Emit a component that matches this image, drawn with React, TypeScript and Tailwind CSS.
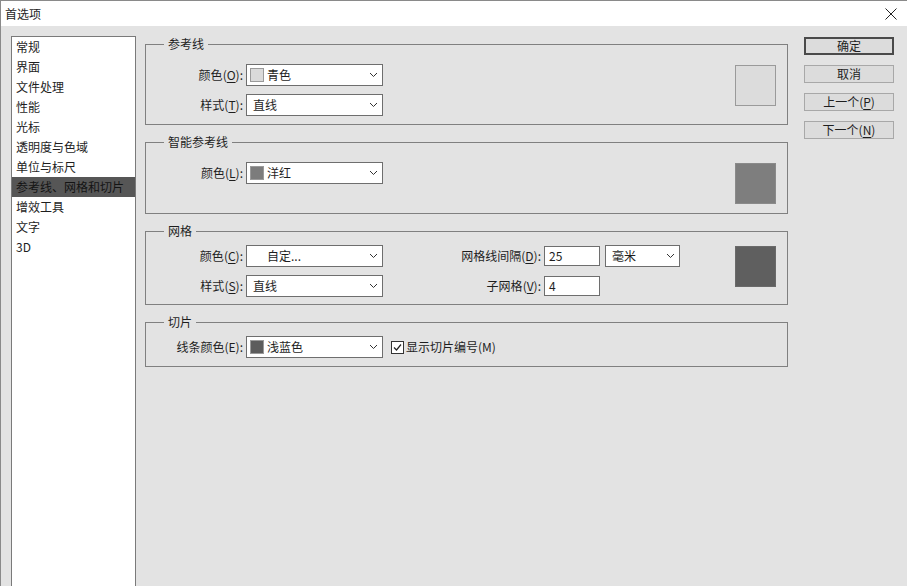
import React from 'react';

const listItems = [
    '常规',
    '界面',
    '文件处理',
    '性能',
    '光标',
    '透明度与色域',
    '单位与标尺',
    '参考线、网格和切片',
    '增效工具',
    '文字',
    '3D',
];

const Chevron: React.FC = () => (
    <svg width="9" height="6" viewBox="0 0 9 6" className="ml-auto mr-[4px]">
        <path d="M1 1 L4.5 4.5 L8 1" fill="none" stroke="#333" strokeWidth="1" />
    </svg>
);

// label with one underlined mnemonic letter, e.g. 颜色(O):
const Label: React.FC<{ text: string; k?: string; u?: boolean; w?: string }> = ({ text, k, u = true, w = 'w-[97px]' }) => (
    <span className={`${w} shrink-0 text-right whitespace-nowrap`}>
        {text}
        {k && (
            <>
                (<span className={u ? 'underline underline-offset-2' : ''}>{k}</span>):
            </>
        )}
    </span>
);

const Select: React.FC<{ text: string; swatch?: string; indent?: string; w?: string }> = ({
    text,
    swatch,
    indent = 'pl-[6px]',
    w = 'w-[137px]',
}) => (
    <div className={`${w} h-[22px] shrink-0 border border-[#6e6e6e] bg-white flex items-center`}>
        {swatch ? (
            <>
                <span className={`ml-[3px] w-[14px] h-[14px] border border-[#9a9a9a] ${swatch}`} />
                <span className="ml-[3px]">{text}</span>
            </>
        ) : (
            <span className={indent}>{text}</span>
        )}
        <Chevron />
    </div>
);

const Input: React.FC<{ value: string }> = ({ value }) => (
    <div className="w-[56px] h-[20px] border border-[#6e6e6e] bg-white flex items-center pl-[4px]">{value}</div>
);

const Swatch: React.FC<{ color: string; mt?: string }> = ({ color, mt = 'mt-[1px]' }) => (
    <div className={`ml-auto mr-[11px] w-[41px] h-[41px] shrink-0 border ${color} ${mt}`} />
);

const Group: React.FC<{ title: string; className?: string; children: React.ReactNode }> = ({ title, className = '', children }) => (
    <fieldset className={`border border-[#808080] ${className}`}>
        <legend className="ml-[18px] px-[4px] leading-[16px] h-[16px]">{title}</legend>
        {children}
    </fieldset>
);

const Button: React.FC<{ primary?: boolean; children: React.ReactNode }> = ({ primary, children }) => (
    <div
        className={`h-[18px] flex items-center justify-center bg-[#dcdcdc] ${
            primary ? 'border-2 border-[#4a4a4a]' : 'border border-[#a8a8a8]'
        }`}
    >
        {children}
    </div>
);

const App: React.FC = () => {
    return (
        <div
            className="w-[907px] h-[586px] overflow-hidden flex flex-col bg-[#e3e3e3] border-l border-[#8a8a8a] text-[12px] text-[#1e1e1e]"
            style={{ fontFamily: '"Noto Sans CJK SC", "Noto Sans", sans-serif' }}
        >
            {/* Title bar */}
            <div className="h-[26px] shrink-0 bg-white border-t border-[#8a8a8a] flex items-center pl-[4px] pr-[10px]">
                <span className="text-[12px]">首选项</span>
                <svg width="12" height="12" viewBox="0 0 12 12" className="ml-auto">
                    <path d="M0.5 0.5 L11.5 11.5 M11.5 0.5 L0.5 11.5" stroke="#222" strokeWidth="1" />
                </svg>
            </div>

            <div className="flex flex-1 pt-[10px] pl-[10px] min-h-0">
                {/* Category list */}
                <div className="w-[125px] shrink-0 bg-white border-x border-t border-[#7a7a7a]">
                    {listItems.map((item, i) => (
                        <div
                            key={item}
                            className={`h-[20px] leading-[20px] pl-[4px] whitespace-nowrap ${
                                i === 7 ? 'bg-[#565656] text-[#141414]' : ''
                            }`}
                        >
                            {item}
                        </div>
                    ))}
                </div>

                {/* Settings groups */}
                <div className="ml-[9px] w-[643px] shrink-0 flex flex-col">
                    <Group title="参考线" className="pt-[12px] pb-[8px]">
                        <div className="flex items-start">
                            <div className="flex flex-col gap-[8px]">
                                <div className="flex items-center">
                                    <Label text="颜色" k="O" />
                                    <span className="ml-[3px]">
                                        <Select text="青色" swatch="bg-[#dadada]" />
                                    </span>
                                </div>
                                <div className="flex items-center">
                                    <Label text="样式" k="T" />
                                    <span className="ml-[3px]">
                                        <Select text="直线" />
                                    </span>
                                </div>
                            </div>
                            <Swatch color="bg-[#dcdcdc] border-[#9a9a9a]" />
                        </div>
                    </Group>

                    <Group title="智能参考线" className="mt-[9px] pt-[12px] pb-[9px]">
                        <div className="flex items-start">
                            <div className="flex items-center">
                                <Label text="颜色" k="L" />
                                <span className="ml-[3px]">
                                    <Select text="洋红" swatch="bg-[#7c7c7c]" />
                                </span>
                            </div>
                            <Swatch color="bg-[#7e7e7e] border-[#8a8a8a]" />
                        </div>
                    </Group>

                    <Group title="网格" className="mt-[9px] pt-[6px] pb-[7px]">
                        <div className="flex items-start">
                            <div className="flex flex-col gap-[8px]">
                                <div className="flex items-center">
                                    <Label text="颜色" k="C" />
                                    <span className="ml-[3px]">
                                        <Select text="自定..." indent="pl-[20px]" />
                                    </span>
                                    <Label text="网格线间隔" k="D" w="w-[158px]" />
                                    <span className="ml-[3px]">
                                        <Input value="25" />
                                    </span>
                                    <span className="ml-[5px]">
                                        <Select text="毫米" w="w-[75px]" />
                                    </span>
                                </div>
                                <div className="flex items-center">
                                    <Label text="样式" k="S" />
                                    <span className="ml-[3px]">
                                        <Select text="直线" />
                                    </span>
                                    <Label text="子网格" k="V" w="w-[158px]" />
                                    <span className="ml-[3px]">
                                        <Input value="4" />
                                    </span>
                                </div>
                            </div>
                            <Swatch color="bg-[#5f5f5f] border-[#6a6a6a]" />
                        </div>
                    </Group>

                    <Group title="切片" className="mt-[9px] pt-[6px] pb-[8px]">
                        <div className="flex items-center">
                            <Label text="线条颜色(E):" />
                            <span className="ml-[3px]">
                                <Select text="浅蓝色" swatch="bg-[#5c5c5c]" />
                            </span>
                            <span className="ml-[8px] w-[13px] h-[13px] border border-[#333] bg-white flex items-center justify-center">
                                <svg width="11" height="11" viewBox="0 0 11 11">
                                    <path d="M2 5.5 L4.5 8 L9 2.5" fill="none" stroke="#222" strokeWidth="1.2" />
                                </svg>
                            </span>
                            <span className="ml-[2px]">显示切片编号(M)</span>
                        </div>
                    </Group>
                </div>

                {/* Buttons */}
                <div className="ml-[16px] w-[90px] shrink-0 flex flex-col gap-[10px] pt-[1px]">
                    <Button primary>确定</Button>
                    <Button>取消</Button>
                    <Button>
                        上一个(<span className="underline underline-offset-2">P</span>)
                    </Button>
                    <Button>
                        下一个(<span className="underline underline-offset-2">N</span>)
                    </Button>
                </div>
            </div>
        </div>
    );
};

export default App;
